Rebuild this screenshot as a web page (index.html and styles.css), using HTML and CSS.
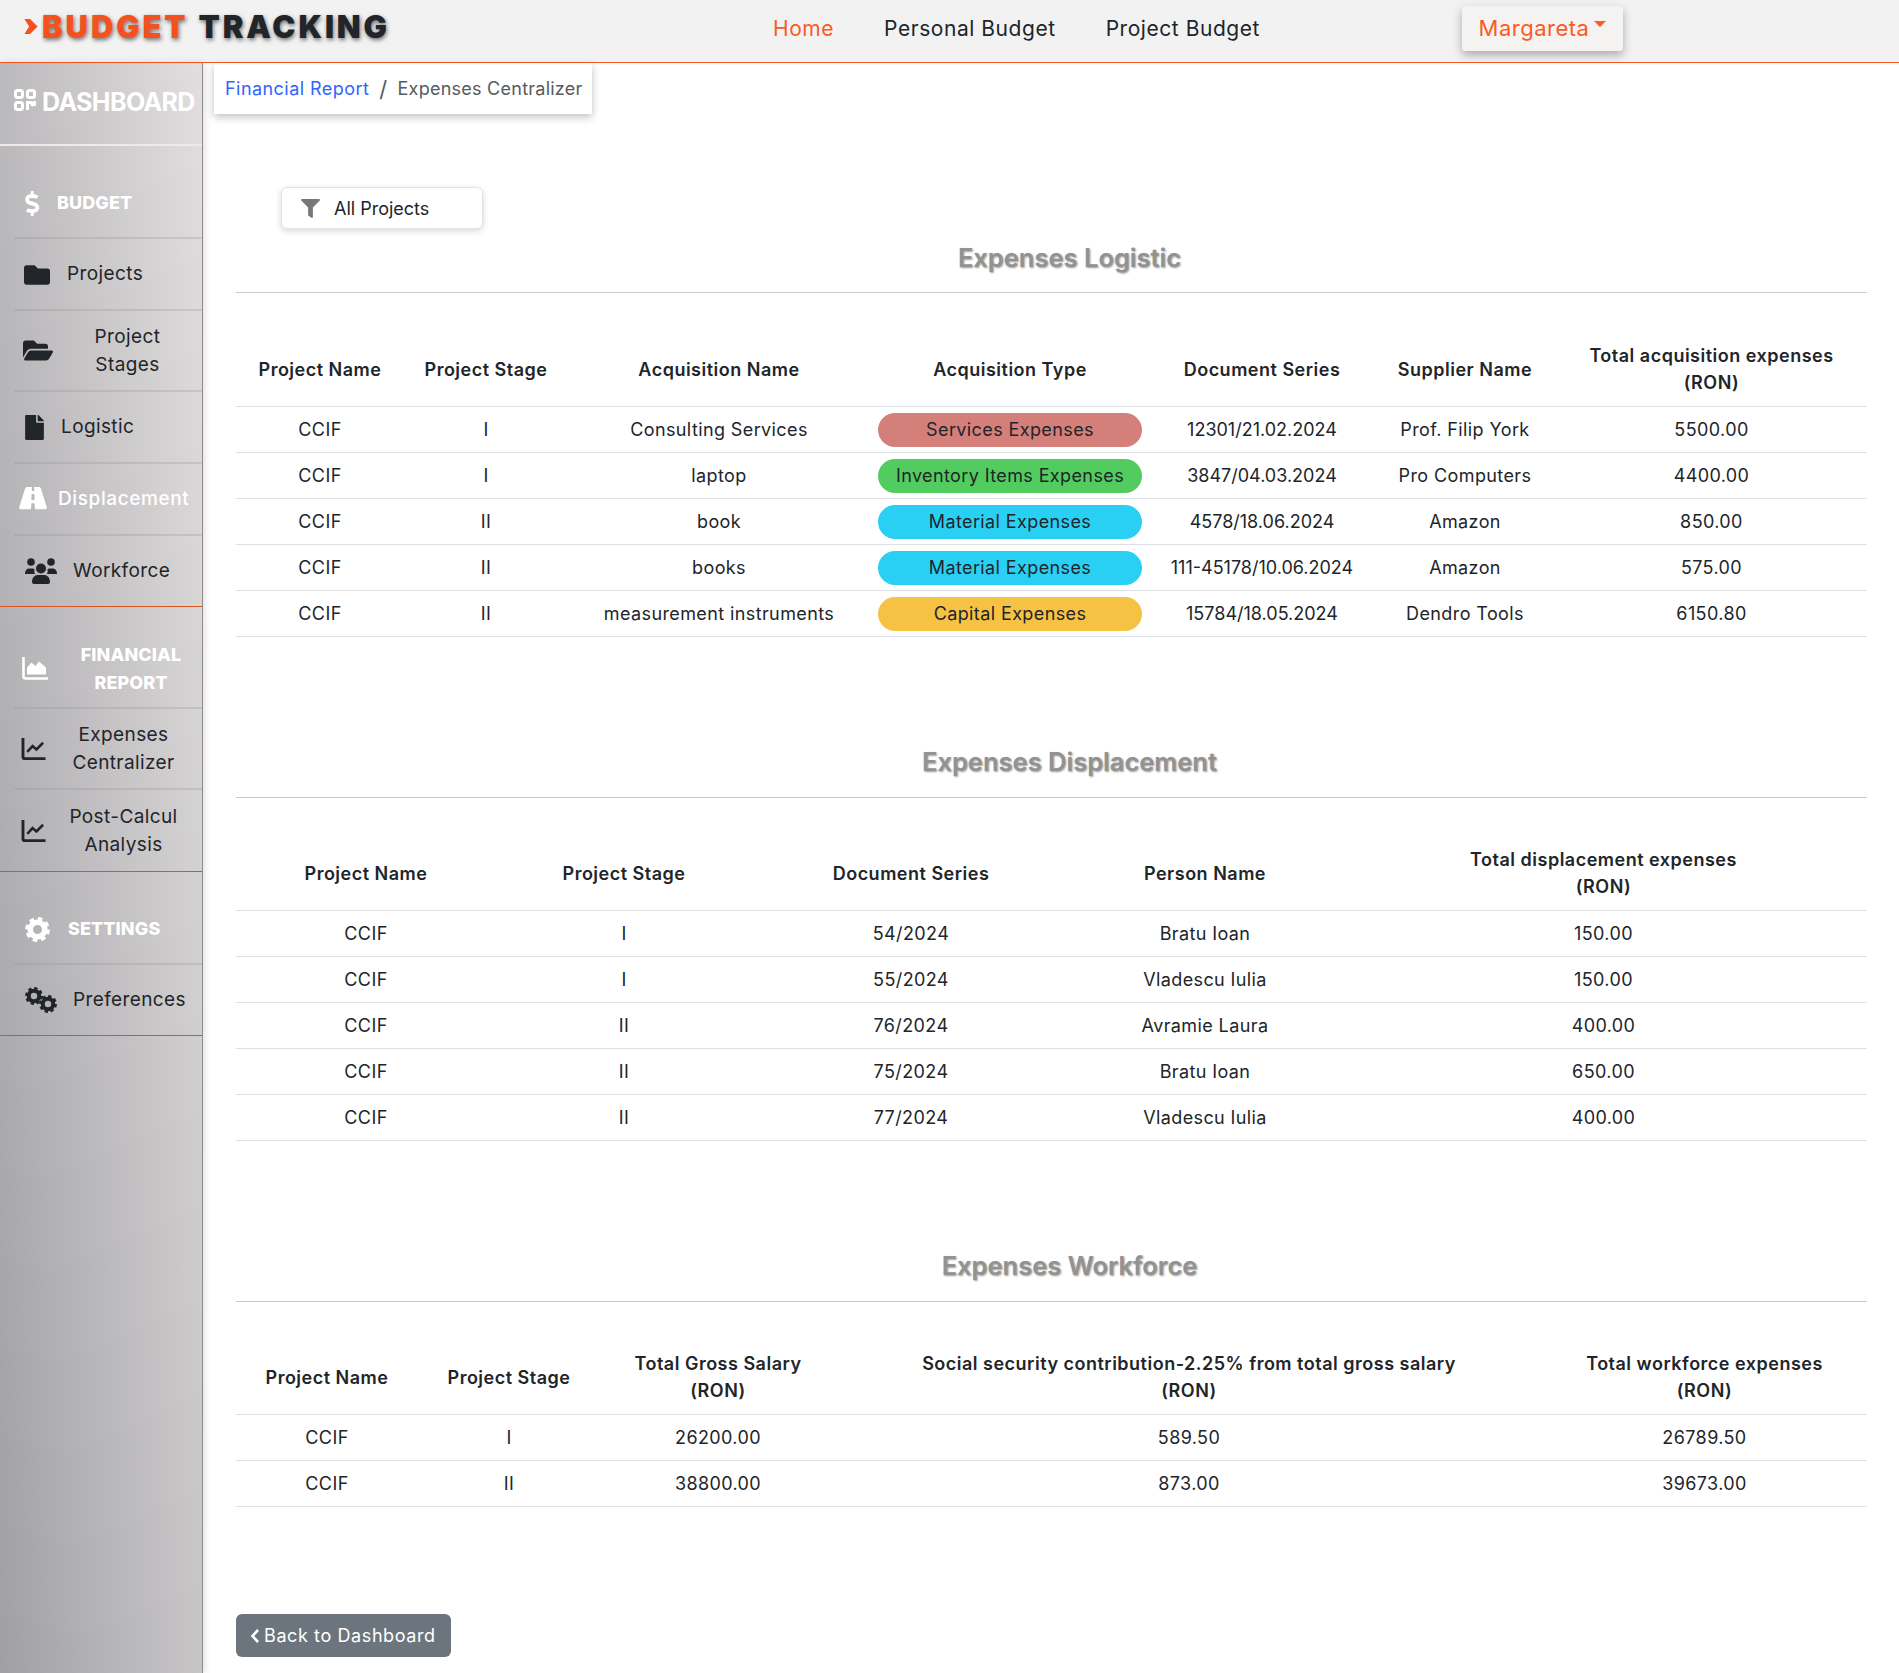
FILE: index.html
```html
<!DOCTYPE html>
<html lang="en">
<head>
  <meta charset="UTF-8">
  <meta name="viewport" content="width=device-width, initial-scale=1.0">
  <title>Expenses Centralizer</title>
  <link rel="stylesheet" href="styles.css">
</head>
<body>
  <svg class="icon-defs" aria-hidden="true">
    <symbol id="i-gear" viewBox="0 0 24 24">
      <circle cx="12" cy="12" r="7" fill="none" stroke="currentColor" stroke-width="5.4"/>
      <circle cx="12" cy="12" r="10.2" fill="none" stroke="currentColor" stroke-width="3.4" stroke-dasharray="4.4 3.6"/>
    </symbol>
    <symbol id="i-chart-line" viewBox="0 0 26 24">
      <path d="M1.500 1v19.500a2 2 0 0 0 2 2H25" fill="none" stroke="currentColor" stroke-width="3"/>
      <path d="M6 15.500l5.500-6 4 3.500 7-7" fill="none" stroke="currentColor" stroke-width="2.600"/>
    </symbol>
  </svg>

  <!-- Top bar -->
  <header class="topbar">
    <a class="logo" href="#">
      <svg class="logo-arrow" viewBox="0 0 14 16"><path d="M0 0h6l8 8-8 8H0l5-8z"/></svg>
      <span class="logo-orange">BUDGET</span> <span class="logo-dark">TRACKING</span>
    </a>
    <nav class="topnav">
      <a class="active" href="#">Home</a>
      <a href="#">Personal Budget</a>
      <a href="#">Project Budget</a>
    </nav>
    <button class="user-btn">Margareta<span class="caret"></span></button>
  </header>

  <div class="layout">
    <!-- Sidebar -->
    <aside class="sidebar">
      <div class="side-title">
        <svg class="ic-dash" viewBox="0 0 22 22" fill="none" stroke="currentColor" stroke-width="3">
          <rect x="1.500" y="1.500" width="7" height="7" rx="2"/>
          <rect x="13.500" y="1.500" width="7" height="7" rx="2"/>
          <rect x="1.500" y="13.500" width="7" height="7" rx="2"/>
          <path d="M13.500 21v-7.500h3.200l1.500 2 1.600-2H21v3.400"/>
        </svg>
        DASHBOARD
      </div>

      <div class="side-group">
        <a class="side-item side-head" href="#">
          <svg class="ic ic-dollar" viewBox="0 0 320 512"><path d="M209.2 233.4l-108-31.6C88.7 198.2 80 186.5 80 173.5c0-16.3 13.2-29.5 29.5-29.5h66.3c12.2 0 24.2 3.7 34.2 10.5 6.1 4.1 14.3 3.1 19.5-2l34.8-34c7.1-6.9 6.1-18.4-1.8-24.5C238 74.8 207.4 64.1 176 64V16c0-8.8-7.2-16-16-16h-32c-8.8 0-16 7.2-16 16v48h-2.5C45.8 64-5.4 118.7.5 183.6c4.2 46.1 39.4 83.6 83.8 96.6l102.5 30c12.5 3.7 21.2 15.3 21.2 28.3 0 16.3-13.2 29.5-29.5 29.5h-66.3C100 368 88 364.3 78 357.5c-6.1-4.1-14.3-3.1-19.5 2l-34.8 34c-7.1 6.9-6.1 18.4 1.8 24.5 24.5 19.2 55.1 29.9 86.5 30v48c0 8.8 7.2 16 16 16h32c8.8 0 16-7.2 16-16v-48.2c46.6-.9 90.3-28.6 105.7-72.7 21.5-61.6-14.6-124.8-72.5-141.7z"/></svg>
          <span>BUDGET</span>
        </a>
        <a class="side-item" href="#">
          <svg class="ic ic-folder" viewBox="0 0 512 512"><path d="M464 128H272l-64-64H48C21.49 64 0 85.49 0 112v288c0 26.51 21.49 48 48 48h416c26.51 0 48-21.49 48-48V176c0-26.51-21.49-48-48-48z"/></svg>
          <span>Projects</span>
        </a>
        <a class="side-item side-two" href="#">
          <svg class="ic ic-open" viewBox="0 0 576 512"><path d="M572.694 292.093L500.27 416.248A63.997 63.997 0 0 1 444.989 448H45.025c-18.523 0-30.064-20.093-20.731-36.093l72.424-124.155A64 64 0 0 1 152 256h399.964c18.523 0 30.064 20.093 20.73 36.093zM152 224h328v-48c0-26.51-21.49-48-48-48H272l-64-64H48C21.49 64 0 85.49 0 112v278.046l69.077-118.418C86.214 242.25 117.989 224 152 224z"/></svg>
          <span class="side-center">Project<br>Stages</span>
        </a>
        <a class="side-item" href="#">
          <svg class="ic ic-file" viewBox="0 0 384 512"><path d="M224 136V0H24C10.7 0 0 10.7 0 24v464c0 13.3 10.7 24 24 24h336c13.3 0 24-10.7 24-24V160H248c-13.2 0-24-10.8-24-24zm160-14.1v6.1H256V0h6.1c6.4 0 12.5 2.5 17 7l97.9 98c4.5 4.5 7 10.6 7 16.9z"/></svg>
          <span>Logistic</span>
        </a>
        <a class="side-item side-white" href="#">
          <svg class="ic ic-road" viewBox="0 0 28 23"><path d="M8 0h5l-.3 4h2.600l-.3-4h5a2 2 0 0 1 1.800 1.200l6 19a1.500 1.500 0 0 1-1.400 2H16l-.4-6h-3.200l-.4 6H1.600a1.500 1.500 0 0 1-1.400-2l6-19A2 2 0 0 1 8 0zm4.600 7l-.2 6h3.200l-.2-6z"/></svg>
          <span>Displacement</span>
        </a>
        <a class="side-item" href="#">
          <svg class="ic ic-users" viewBox="0 0 32 26">
            <circle cx="6" cy="4" r="3.800"/>
            <circle cx="26" cy="4" r="3.800"/>
            <circle cx="16" cy="10.500" r="5"/>
            <path d="M0 15.500c0-3 1.800-5 4-5h3.500c.8 0 1.500.3 2 .8a7 7 0 0 0 .5 4.700H0zM32 15.500c0-3-1.800-5-4-5h-3.500c-.8 0-1.500.3-2 .8a7 7 0 0 1-.5 4.700h10zM7 24c0-4 2.500-7 5.500-7h7c3 0 5.500 3 5.500 7a2 2 0 0 1-2 2H9a2 2 0 0 1-2-2z"/>
          </svg>
          <span>Workforce</span>
        </a>
      </div>

      <div class="side-group">
        <a class="side-item side-head side-two side-report" href="#">
          <svg class="ic ic-area" viewBox="0 0 26 24">
            <path d="M1.500 1v19.500a2 2 0 0 0 2 2H26" fill="none" stroke="currentColor" stroke-width="2.600"/>
            <path d="M5 18.500v-7l4.500-5 4 3.500 3.500-4.500 7 6v7z"/>
          </svg>
          <span class="side-center">FINANCIAL<br>REPORT</span>
        </a>
        <a class="side-item side-two side-thin" href="#">
          <svg class="ic ic-line"><use href="#i-chart-line"/></svg>
          <span class="side-center">Expenses<br>Centralizer</span>
        </a>
        <a class="side-item side-two side-thin" href="#">
          <svg class="ic ic-line"><use href="#i-chart-line"/></svg>
          <span class="side-center">Post-Calcul<br>Analysis</span>
        </a>
      </div>

      <div class="side-group">
        <a class="side-item side-head" href="#">
          <svg class="ic ic-gear"><use href="#i-gear"/></svg>
          <span>SETTINGS</span>
        </a>
        <a class="side-item" href="#">
          <span class="ic-gears">
            <svg class="gear-a"><use href="#i-gear"/></svg>
            <svg class="gear-b"><use href="#i-gear"/></svg>
          </span>
          <span>Preferences</span>
        </a>
      </div>
    </aside>

    <!-- Main content -->
    <main class="content">
      <div class="breadcrumb">
        <a href="#">Financial Report</a>
        <span class="sep">/</span>
        <span>Expenses Centralizer</span>
      </div>

      <button class="filter-btn">
        <svg viewBox="0 0 512 512"><path d="M487.976 0H24.028C2.71 0-8.047 25.866 7.058 40.971L192 225.941V432c0 7.831 3.821 15.17 10.237 19.662l80 55.98C298.02 518.69 320 507.493 320 487.98V225.941l184.947-184.97C520.021 25.896 509.338 0 487.976 0z"/></svg>
        All Projects
      </button>

      <!-- Logistic -->
      <h2 class="section-title section-first">Expenses Logistic</h2>
      <table class="data-table">
        <colgroup>
          <col class="w168"><col class="w164"><col class="w302"><col class="w280"><col class="w224"><col class="w182"><col class="w311">
        </colgroup>
        <thead>
          <tr>
            <th>Project Name</th>
            <th>Project Stage</th>
            <th>Acquisition Name</th>
            <th>Acquisition Type</th>
            <th>Document Series</th>
            <th>Supplier Name</th>
            <th>Total acquisition expenses<br>(RON)</th>
          </tr>
        </thead>
        <tbody>
          <tr><td>CCIF</td><td>I</td><td>Consulting Services</td><td><span class="pill pill-services">Services Expenses</span></td><td class="doc-no">12301/21.02.2024</td><td>Prof. Filip York</td><td>5500.00</td></tr>
          <tr><td>CCIF</td><td>I</td><td>laptop</td><td><span class="pill pill-inventory">Inventory Items Expenses</span></td><td class="doc-no">3847/04.03.2024</td><td>Pro Computers</td><td>4400.00</td></tr>
          <tr><td>CCIF</td><td>II</td><td>book</td><td><span class="pill pill-material">Material Expenses</span></td><td class="doc-no">4578/18.06.2024</td><td>Amazon</td><td>850.00</td></tr>
          <tr><td>CCIF</td><td>II</td><td>books</td><td><span class="pill pill-material">Material Expenses</span></td><td class="doc-no">111-45178/10.06.2024</td><td>Amazon</td><td>575.00</td></tr>
          <tr><td>CCIF</td><td>II</td><td>measurement instruments</td><td><span class="pill pill-capital">Capital Expenses</span></td><td class="doc-no">15784/18.05.2024</td><td>Dendro Tools</td><td>6150.80</td></tr>
        </tbody>
      </table>

      <!-- Displacement -->
      <h2 class="section-title">Expenses Displacement</h2>
      <table class="data-table">
        <colgroup>
          <col class="w260"><col class="w256"><col class="w318"><col class="w270"><col class="w527">
        </colgroup>
        <thead>
          <tr>
            <th>Project Name</th>
            <th>Project Stage</th>
            <th>Document Series</th>
            <th>Person Name</th>
            <th>Total displacement expenses<br>(RON)</th>
          </tr>
        </thead>
        <tbody>
          <tr><td>CCIF</td><td>I</td><td>54/2024</td><td>Bratu Ioan</td><td>150.00</td></tr>
          <tr><td>CCIF</td><td>I</td><td>55/2024</td><td>Vladescu Iulia</td><td>150.00</td></tr>
          <tr><td>CCIF</td><td>II</td><td>76/2024</td><td>Avramie Laura</td><td>400.00</td></tr>
          <tr><td>CCIF</td><td>II</td><td>75/2024</td><td>Bratu Ioan</td><td>650.00</td></tr>
          <tr><td>CCIF</td><td>II</td><td>77/2024</td><td>Vladescu Iulia</td><td>400.00</td></tr>
        </tbody>
      </table>

      <!-- Workforce -->
      <h2 class="section-title">Expenses Workforce</h2>
      <table class="data-table">
        <colgroup>
          <col class="w182"><col class="w182"><col class="w236"><col class="w706"><col class="w325">
        </colgroup>
        <thead>
          <tr>
            <th>Project Name</th>
            <th>Project Stage</th>
            <th>Total Gross Salary<br>(RON)</th>
            <th>Social security contribution-2.25% from total gross salary<br>(RON)</th>
            <th>Total workforce expenses<br>(RON)</th>
          </tr>
        </thead>
        <tbody>
          <tr><td>CCIF</td><td>I</td><td>26200.00</td><td>589.50</td><td>26789.50</td></tr>
          <tr><td>CCIF</td><td>II</td><td>38800.00</td><td>873.00</td><td>39673.00</td></tr>
        </tbody>
      </table>

      <a class="back-btn" href="#">
        <svg viewBox="0 0 10 16"><path d="M8 2L2.500 8 8 14" fill="none" stroke="currentColor" stroke-width="2.600"/></svg>
        Back to Dashboard
      </a>
    </main>
  </div>
</body>
</html>
```
FILE: styles.css
```css
* {
  box-sizing: border-box;
}

body {
  font-family: Inter, "Noto Sans", sans-serif;
  font-size: 18px;
  letter-spacing: 0.39px;
  color: #212529;
  margin: 0;
  background-color: #fff;
}

a {
  text-decoration: none;
  color: inherit;
}

button {
  font: inherit;
  letter-spacing: inherit;
}

.icon-defs {
  display: none;
}

/* Top bar */
.topbar {
  display: grid;
  grid-template-columns: 773px 689px auto;
  align-items: center;
  height: 63px;
  background-color: #f2f2f2;
  border-bottom: 1px solid #fb5a25;
}

.logo {
  display: flex;
  align-items: center;
  gap: 10px;
  padding: 0 0 10px 24px;
  font-size: 31px;
  font-weight: 900;
  letter-spacing: 2.900px;
  text-shadow: 1px 2px 4px rgba(0, 0, 0, 0.55);
}

.logo-arrow {
  width: 14px;
  height: 15px;
  margin-right: -6px;
  fill: #f4511e;
}

.logo-orange {
  color: #f4511e;
}

.logo-dark {
  color: #212529;
}

.topnav {
  display: flex;
  gap: 50px;
  padding-bottom: 5px;
  font-size: 21px;
  letter-spacing: 0.55px;
}

.topnav .active {
  color: #fb5a25;
}

.user-btn {
  display: flex;
  align-self: start;
  align-items: center;
  justify-content: center;
  width: 161px;
  height: 45px;
  margin-top: 6px;
  padding: 0 0 2px;
  font-size: 22px;
  letter-spacing: 0.5px;
  color: #fb5a25;
  background-color: #f5f3f2;
  border: none;
  border-radius: 3px;
  box-shadow: 0 4px 10px rgba(0, 0, 0, 0.3);
}

.caret {
  align-self: flex-start;
  width: 0;
  height: 0;
  margin: 15px 0 0 5px;
  border-top: 6px solid #fb5a25;
  border-left: 6px solid transparent;
  border-right: 6px solid transparent;
}

.layout {
  display: flex;
  min-height: 1610px;
}

/* Sidebar */
.sidebar {
  flex: 0 0 203px;
  background: linear-gradient(85deg, #a0a0a4 0, #e2dede 100%);
  border-right: 1px solid #8b8b8b;
  box-shadow: 2px 0 7px rgba(0, 0, 0, 0.12);
}

.side-title {
  display: flex;
  align-items: flex-start;
  gap: 6px;
  height: 83px;
  padding: 25px 0 0 14px;
  font-size: 25px;
  font-weight: 700;
  line-height: 28px;
  letter-spacing: -0.6px;
  color: #fff;
  border-bottom: 2px solid #eeeaea;
}

.ic-dash {
  width: 22px;
  height: 22px;
  margin-top: 1px;
}

.side-group {
  border-bottom: 1px solid #d9541e;
}

.side-item {
  display: flex;
  align-items: center;
  height: 72px;
  margin-left: 14px;
  padding-left: 10px;
  line-height: 28px;
  font-size: 19px;
  border-bottom: 2px solid rgba(150, 148, 150, 0.3);
}

.side-group .side-item:last-child {
  height: 70px;
  border-bottom: none;
}

.side-item.side-two {
  height: 81px;
}

.side-group .side-two:last-child {
  height: 81px;
}

.side-head {
  height: 93px;
  padding-top: 23px;
  font-size: 18px;
  font-weight: 800;
  letter-spacing: 0.1px;
  color: #fff;
}

.side-head.side-two {
  height: 102px;
}

.side-white {
  color: #fff;
  font-weight: 500;
  letter-spacing: 0.6px;
}

.side-center {
  flex: 1;
  text-align: center;
}

.side-report .side-center {
  padding-left: 12px;
}

.side-thin .side-center {
  padding-right: 2px;
}

.ic {
  flex: none;
  fill: currentColor;
}

.ic-dollar {
  width: 16px;
  height: 25px;
  margin: 0 16px 0 1px;
}

.ic-folder {
  width: 26px;
  height: 26px;
  margin: 1px 17px 0 0;
}

.ic-open {
  width: 30px;
  height: 27px;
  margin-left: -1px;
}

.ic-file {
  width: 19px;
  height: 25px;
  margin-left: 1px;
  margin-right: 17px;
}

.ic-road {
  width: 28px;
  height: 23px;
  margin: -1px 11px 0 -5px;
}

.ic-users {
  width: 32px;
  height: 26px;
  margin: -1px 16px 0 1px;
}

.ic-area {
  width: 26px;
  height: 24px;
  margin: -2px 0 0 -2px;
}

.ic-line {
  width: 26px;
  height: 23px;
  margin-left: -3px;
}

.ic-gear {
  width: 25px;
  height: 25px;
  margin: 0 18px 0 1px;
}

.ic-gears {
  position: relative;
  flex: none;
  width: 32px;
  height: 26px;
  margin: -1px 16px 0 1px;
}

.gear-a,
.gear-b {
  position: absolute;
  width: 18px;
  height: 18px;
}

.gear-a {
  top: 0;
  left: 0;
}

.gear-b {
  top: 8px;
  left: 14px;
}

/* Main */
.content {
  flex: 1;
  padding: 0 32px 15px 33px;
}

.breadcrumb {
  display: flex;
  align-items: center;
  gap: 10px;
  width: 378px;
  height: 51px;
  margin-left: -22px;
  padding-left: 11px;
  letter-spacing: 0.25px;
  color: #555b61;
  background-color: #fff;
  box-shadow: 0 3px 8px rgba(0, 0, 0, 0.25);
}

.breadcrumb a {
  letter-spacing: 0.45px;
  color: #2f65ff;
}

.sep {
  font-size: 22px;
}

.filter-btn {
  display: flex;
  align-items: center;
  gap: 14px;
  width: 202px;
  height: 42px;
  margin: 73px 0 0 45px;
  padding: 0 0 0 19px;
  letter-spacing: 0;
  color: #212529;
  background-color: #fff;
  border: 1px solid #e3e3e3;
  border-radius: 6px;
  box-shadow: 0 2px 6px rgba(0, 0, 0, 0.16);
}

.filter-btn svg {
  width: 19px;
  height: 19px;
  fill: #777;
}

.section-title {
  margin: 107px 0 42px;
  padding: 0 0 17px 36px;
  font-size: 25.5px;
  font-weight: 600;
  line-height: 36px;
  text-align: center;
  letter-spacing: 0;
  color: #929292;
  text-shadow: 1px 1px 2px rgba(0, 0, 0, 0.4);
  border-bottom: 1px solid #c9c9c9;
}

.section-first {
  margin: 11px 0 43px;
  padding-bottom: 16px;
}

.data-table {
  width: 1631px;
  table-layout: fixed;
  border-collapse: collapse;
}

.data-table th,
.data-table td {
  text-align: center;
  border-bottom: 1px solid #dee2e6;
}

.data-table th {
  padding: 6px 8px 10px;
  font-weight: 600;
  line-height: 27px;
  letter-spacing: 0.5px;
  height: 70px;
}

.data-table td {
  padding: 6px 8px 5px;
  height: 46px;
  line-height: 24px;
}

.data-table .doc-no {
  letter-spacing: 0;
}

.w164 { width: 164px; }
.w168 { width: 168px; }
.w182 { width: 182px; }
.w224 { width: 224px; }
.w236 { width: 236px; }
.w256 { width: 256px; }
.w260 { width: 260px; }
.w270 { width: 270px; }
.w280 { width: 280px; }
.w302 { width: 302px; }
.w311 { width: 311px; }
.w318 { width: 318px; }
.w325 { width: 325px; }
.w527 { width: 527px; }
.w706 { width: 706px; }

.pill {
  display: block;
  height: 34px;
  line-height: 34px;
  border-radius: 17px;
}

.pill-services { background-color: #d47f7a; }
.pill-inventory { background-color: #52cc5e; }
.pill-material { background-color: #29d0f4; }
.pill-capital { background-color: #f6c244; }

.back-btn {
  display: flex;
  align-items: center;
  gap: 4px;
  width: 215px;
  height: 43px;
  margin-top: 107px;
  padding-left: 14px;
  letter-spacing: 0.6px;
  color: #fff;
  background-color: #6c757d;
  border-radius: 6px;
}

.back-btn svg {
  width: 10px;
  height: 16px;
}
```
